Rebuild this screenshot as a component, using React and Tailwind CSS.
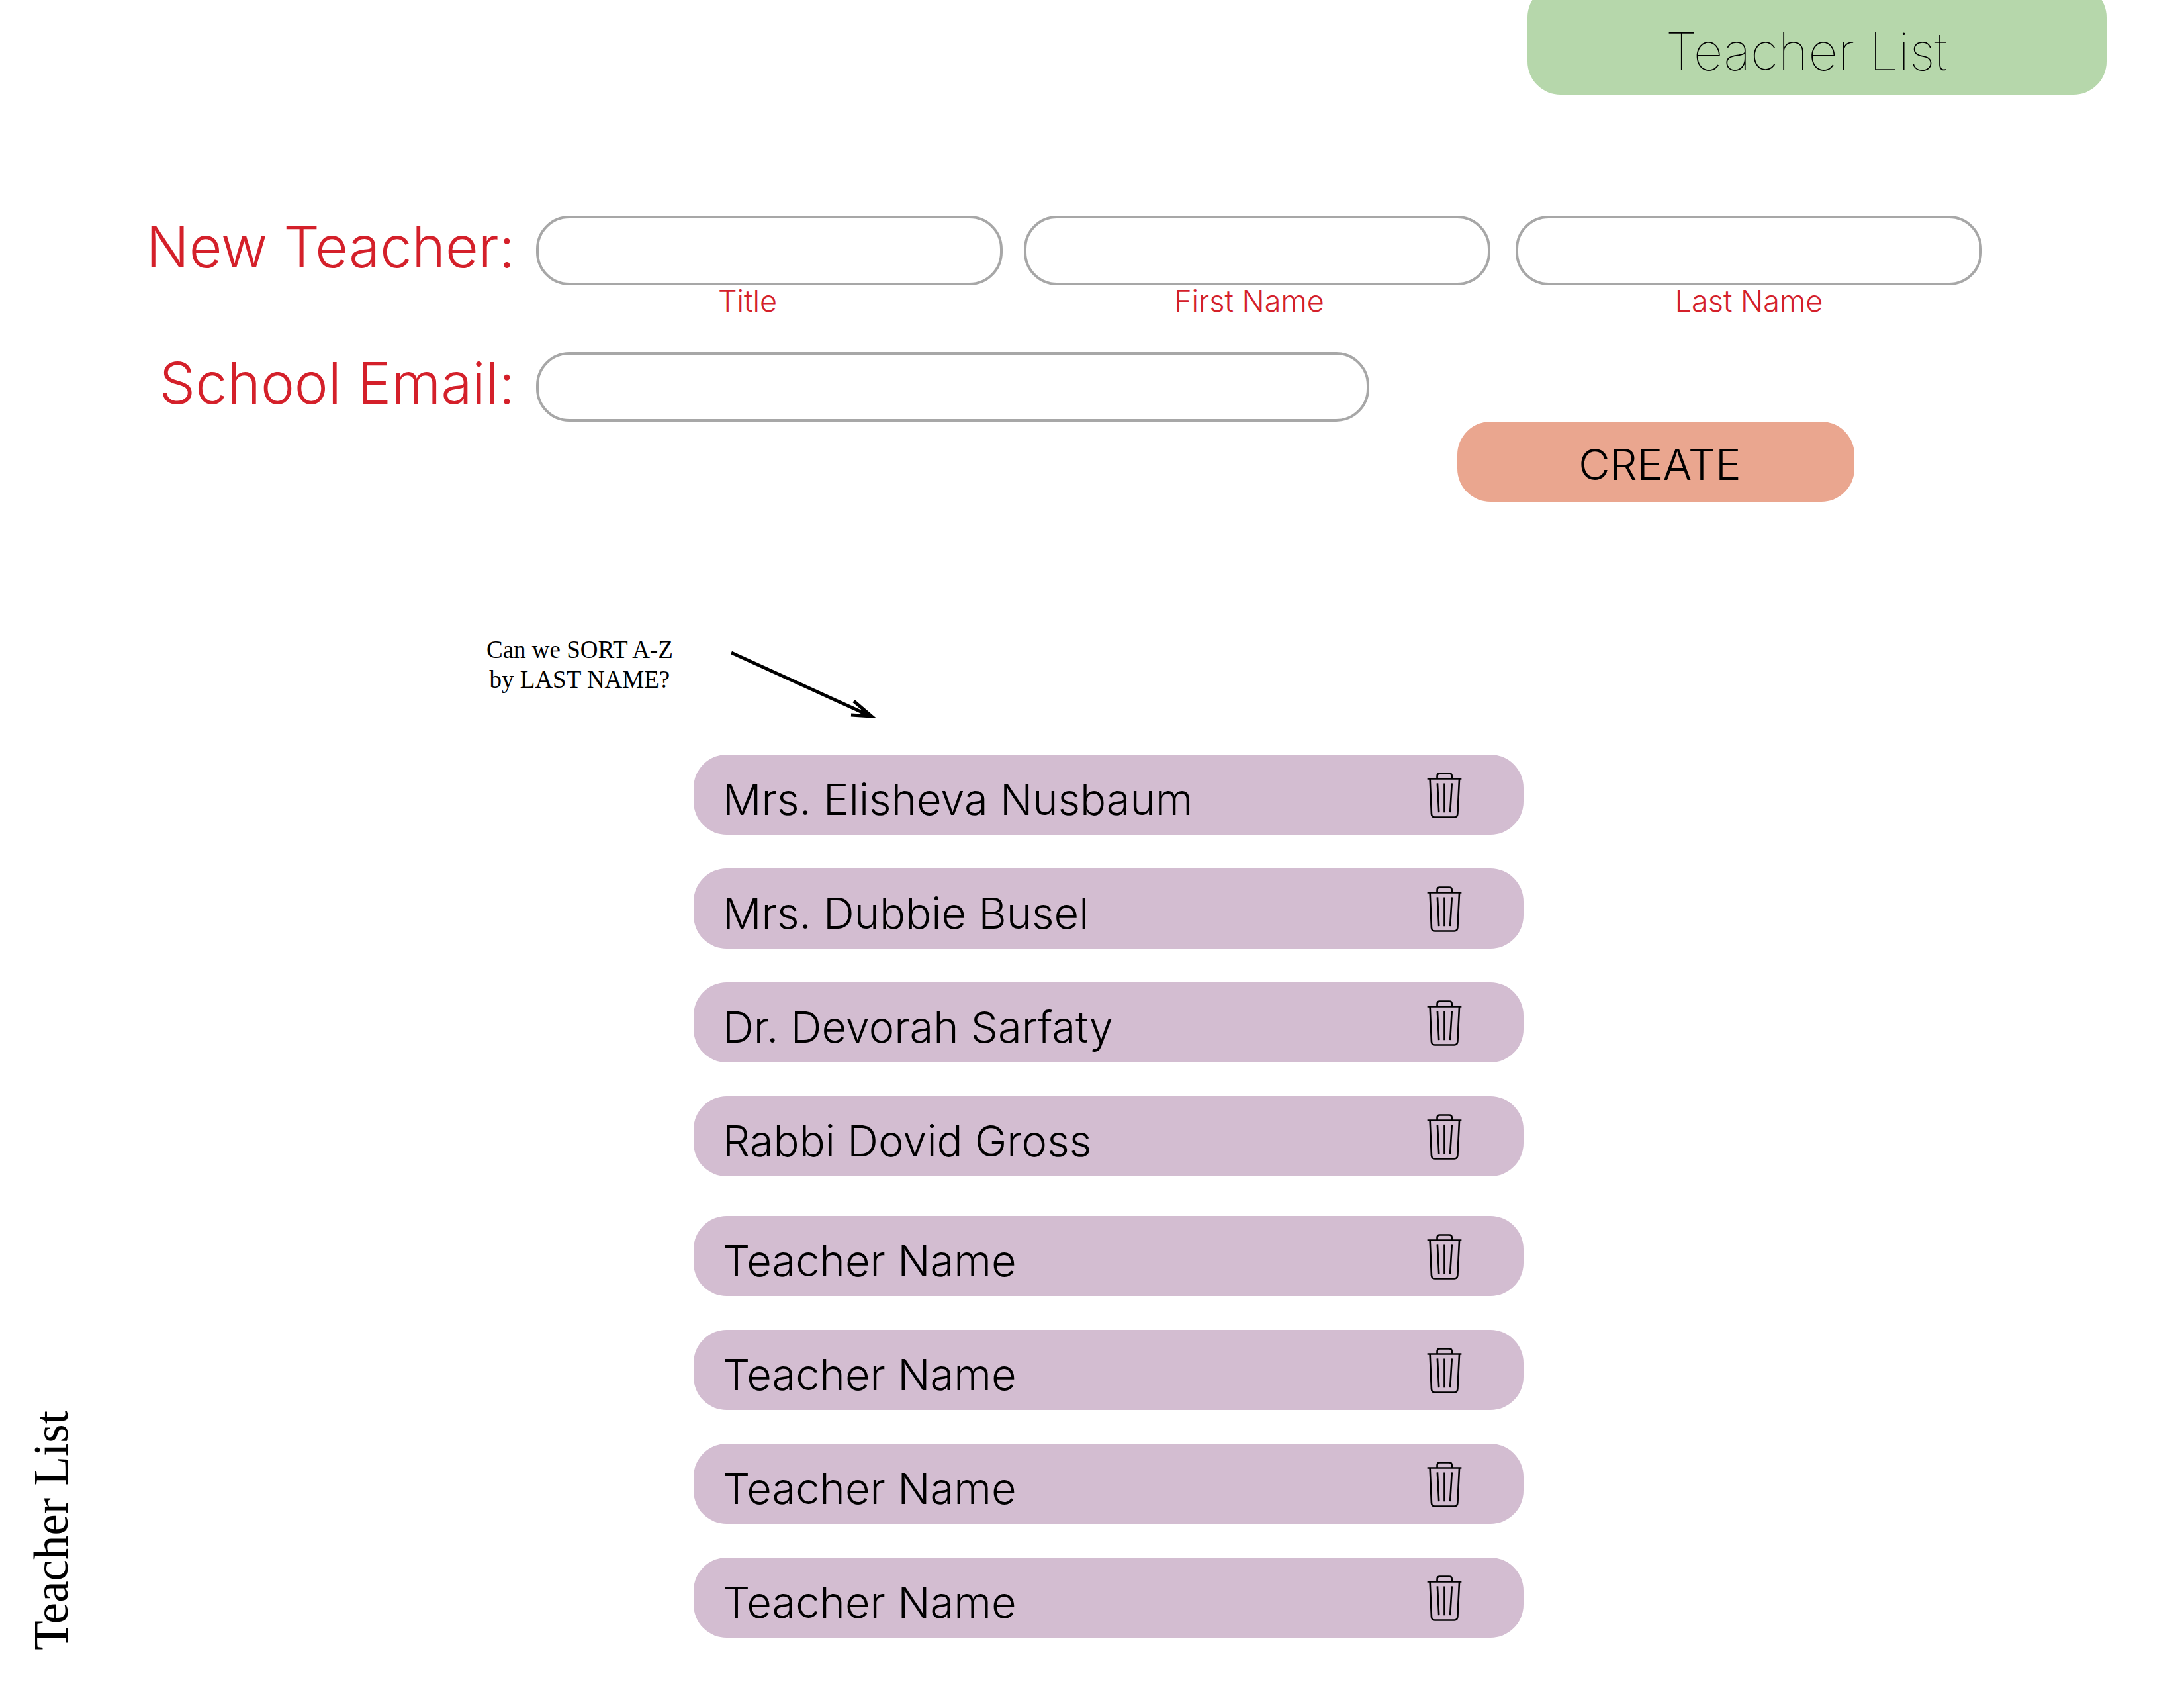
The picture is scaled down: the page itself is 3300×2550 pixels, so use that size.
const fields = [
  { id: "title", label: "Title", cell: "", caption: "pr-[66px]" },
  { id: "first-name", label: "First Name", cell: "pl-8", caption: "pr-6" },
  { id: "last-name", label: "Last Name", cell: "pl-[38px]", caption: "" },
];

const teacherGroups = [
  ["Mrs. Elisheva Nusbaum", "Mrs. Dubbie Busel", "Dr. Devorah Sarfaty", "Rabbi Dovid Gross"],
  ["Teacher Name", "Teacher Name", "Teacher Name", "Teacher Name"],
];

const inputStyle = "block h-[105px] w-full rounded-[50px] border-4 border-[#a7a7a7] bg-white px-10 text-[65px] font-light text-black";
const labelStyle = "flex h-[105px] items-center justify-end pr-8 pb-3 text-[86px] leading-none font-light whitespace-nowrap text-[#d4202a]";

function TrashIcon() {
  return (
    <svg viewBox="108 134 160 210" className="h-[70px] w-[53px]" fill="none" stroke="currentColor" strokeWidth="8" aria-hidden="true">
      <path d="M155 164v-11q0-12 12-12h43q12 0 12 12v11" />
      <path d="M110 165h156" />
      <path d="M122 165l7 160q1 15 15 15h89q14 0 15-15l8-160" />
      <path d="M156 186l7 132M188 186v132M222 186l-8 132" />
    </svg>
  );
}

function TeacherRow({ name }) {
  return (
    <li className="flex h-[121px] items-center justify-between rounded-[50px] bg-[#d3bdd1] pr-[93px] pl-11">
      <span className="pt-3.5 text-[65px] leading-none font-light">{name}</span>
      <button type="button" aria-label={"Delete " + name}>
        <TrashIcon />
      </button>
    </li>
  );
}

export default function App() {
  return (
    <div className="flex min-h-screen bg-white font-['Inter','Liberation_Sans',sans-serif] text-black">
      <aside className="flex w-40 shrink-0 items-end pb-[57px] pl-[38px]">
        <p className="rotate-180 font-['Liberation_Serif',serif] text-[73px] leading-[80px] whitespace-nowrap [writing-mode:vertical-rl]">
          Teacher List
        </p>
      </aside>

      <main className="min-w-0 flex-1">
        <header className="flex justify-end overflow-hidden pr-[117px]">
          <h1 className="-mt-6 w-[875px] rounded-[50px] bg-[#b6d7ab] pt-[54px] pr-8 pb-[17px] text-center text-[78px] leading-[96px] font-thin">
            Teacher List
          </h1>
        </header>

        <form className="pt-[183px] pr-[305px]" onSubmit={(e) => e.preventDefault()}>
          <div className="flex">
            <label htmlFor="title" className={labelStyle + " w-[650px] shrink-0"}>New Teacher:</label>
            <div className="grid flex-1 grid-cols-[705fr_737fr_743fr]">
              {fields.map((f) => (
                <div key={f.id} className={f.cell}>
                  <input id={f.id} type="text" aria-label={f.label} className={inputStyle} />
                  <p className={"text-center text-[45px] leading-[48px] font-light text-[#d4202a] " + f.caption}>{f.label}</p>
                </div>
              ))}
            </div>
          </div>
          <div className="flex pt-[53px]">
            <label htmlFor="email" className={labelStyle + " w-[650px] shrink-0"}>School Email:</label>
            <div className="flex-1">
              <div className="w-[57.6%]">
                <input id="email" type="email" className={inputStyle} />
              </div>
            </div>
          </div>
          <div className="flex justify-end pr-[193px]">
            <button type="submit" className="h-[121px] w-[600px] rounded-[50px] bg-[#eaa68f] pt-2 pl-3 text-[65px] leading-none font-light">
              CREATE
            </button>
          </div>
        </form>

        <section className="pt-[201px]">
          <div className="flex gap-[86px] pl-[575px]">
            <p className="text-center font-['Liberation_Serif',serif] text-[37px] leading-[45px] whitespace-nowrap">
              Can we SORT A-Z
              <br />
              by LAST NAME?
            </p>
            <svg viewBox="0 0 222 110" className="mt-5 h-[110px] w-[222px]" fill="none" stroke="black" strokeWidth="5" aria-hidden="true">
              <path d="M2 7l211 96" />
              <path d="M187 80l27 23-31-2" />
              <path d="M216 105l-15-13-5 9z" fill="black" stroke="none" />
            </svg>
          </div>
          <div className="flex flex-col gap-[60px] pt-[51px] pr-[110px]">
            {teacherGroups.map((group, i) => (
              <ul key={i} className="mx-auto flex w-full max-w-[1254px] flex-col gap-[51px]">
                {group.map((name, j) => (
                  <TeacherRow key={j} name={name} />
                ))}
              </ul>
            ))}
          </div>
        </section>
      </main>
    </div>
  );
}
